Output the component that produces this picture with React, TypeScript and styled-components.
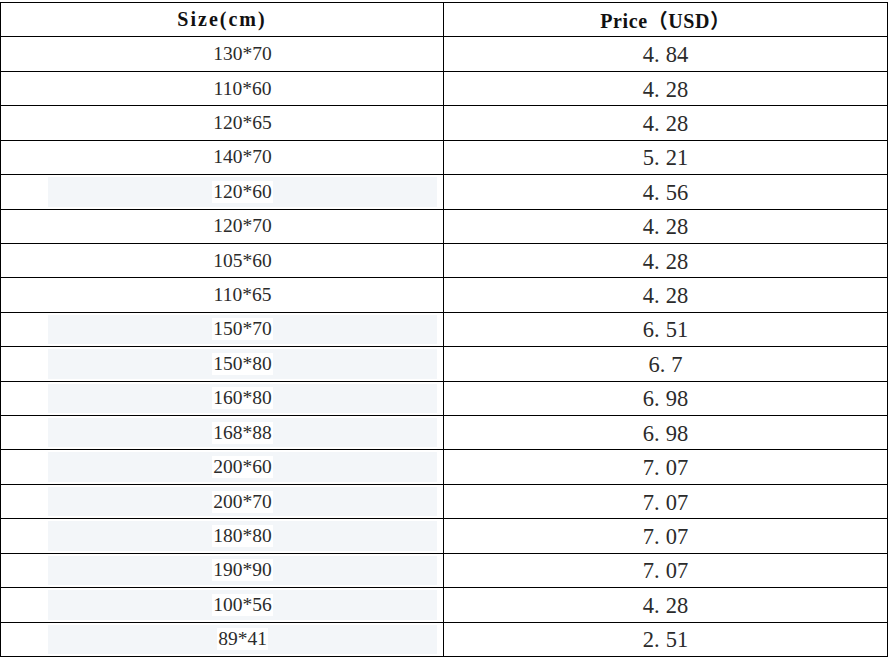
import { createGlobalStyle, styled } from "styled-components";

const GlobalStyle = createGlobalStyle`
  html, body {
    margin: 0;
    padding: 0;
    background: #fff;
  }
  body {
    font-family: "Liberation Serif", "Noto Sans CJK SC", serif;
    color: #1a1a1a;
  }
`;

interface Row {
  size: string;
  price: string;
  marked?: boolean;
}

const rows: Row[] = [
  { size: "130*70", price: "4.84" },
  { size: "110*60", price: "4.28" },
  { size: "120*65", price: "4.28" },
  { size: "140*70", price: "5.21" },
  { size: "120*60", price: "4.56", marked: true },
  { size: "120*70", price: "4.28" },
  { size: "105*60", price: "4.28" },
  { size: "110*65", price: "4.28" },
  { size: "150*70", price: "6.51", marked: true },
  { size: "150*80", price: "6.7", marked: true },
  { size: "160*80", price: "6.98", marked: true },
  { size: "168*88", price: "6.98", marked: true },
  { size: "200*60", price: "7.07", marked: true },
  { size: "200*70", price: "7.07", marked: true },
  { size: "180*80", price: "7.07", marked: true },
  { size: "190*90", price: "7.07", marked: true },
  { size: "100*56", price: "4.28", marked: true },
  { size: "89*41", price: "2.51", marked: true },
];

// the decimal point gets extra room, as the wide full-stop of the source font
const Price = ({ value }: { value: string }) => {
  const [whole, frac] = value.split(".");
  return (
    <PriceCell>
      {whole}
      <Dot>.</Dot>
      {frac}
    </PriceCell>
  );
};

export default function App() {
  return (
    <>
      <GlobalStyle />
      <Table>
        <HeadCell $spacing={2}>Size(cm)</HeadCell>
        <HeadCell $spacing={0.6}>Price（USD）</HeadCell>
        {rows.map((r) => (
          <Line key={r.size}>
            <SizeCell>
              <SizeBox $marked={r.marked}>
                <SizeText>{r.size}</SizeText>
              </SizeBox>
            </SizeCell>
            <Price value={r.price} />
          </Line>
        ))}
      </Table>
    </>
  );
}

const Table = styled.div`
  display: grid;
  grid-template-columns: 443px 444px;
  grid-template-rows: repeat(19, 1fr);
  height: 655px;
  width: 888px;
  margin-top: 2px;
  border-top: 1px solid #000;
  border-left: 1px solid #000;
  box-sizing: border-box;
`;

const Line = styled.div`
  display: contents;
`;

const Cell = styled.div`
  border-right: 1px solid #000;
  border-bottom: 1px solid #000;
  display: flex;
  align-items: center;
  justify-content: center;
  box-sizing: border-box;
  min-height: 0;
  white-space: pre;
`;

const HeadCell = styled(Cell)<{ $spacing: number }>`
  font-weight: bold;
  font-size: 20px;
  letter-spacing: ${(p) => p.$spacing}px;
  color: #111;
  padding-bottom: 1px;
`;

const SizeCell = styled(Cell)`
  align-items: stretch;
  padding: 2px 6px 2px 47px;
`;

const SizeBox = styled.div<{ $marked?: boolean }>`
  flex: 1;
  display: flex;
  align-items: center;
  justify-content: center;
  background: ${(p) => (p.$marked ? "#f3f6f9" : "transparent")};
`;

const SizeText = styled.span`
  background: #fff;
  font-size: 19.5px;
  color: #2b2b2b;
  line-height: 22px;
  padding: 0 1px;
`;

const PriceCell = styled(Cell)`
  font-size: 22.5px;
  color: #2b2b2b;
  padding-top: 2px;
`;

const Dot = styled.span`
  margin-right: 6px;
`;
